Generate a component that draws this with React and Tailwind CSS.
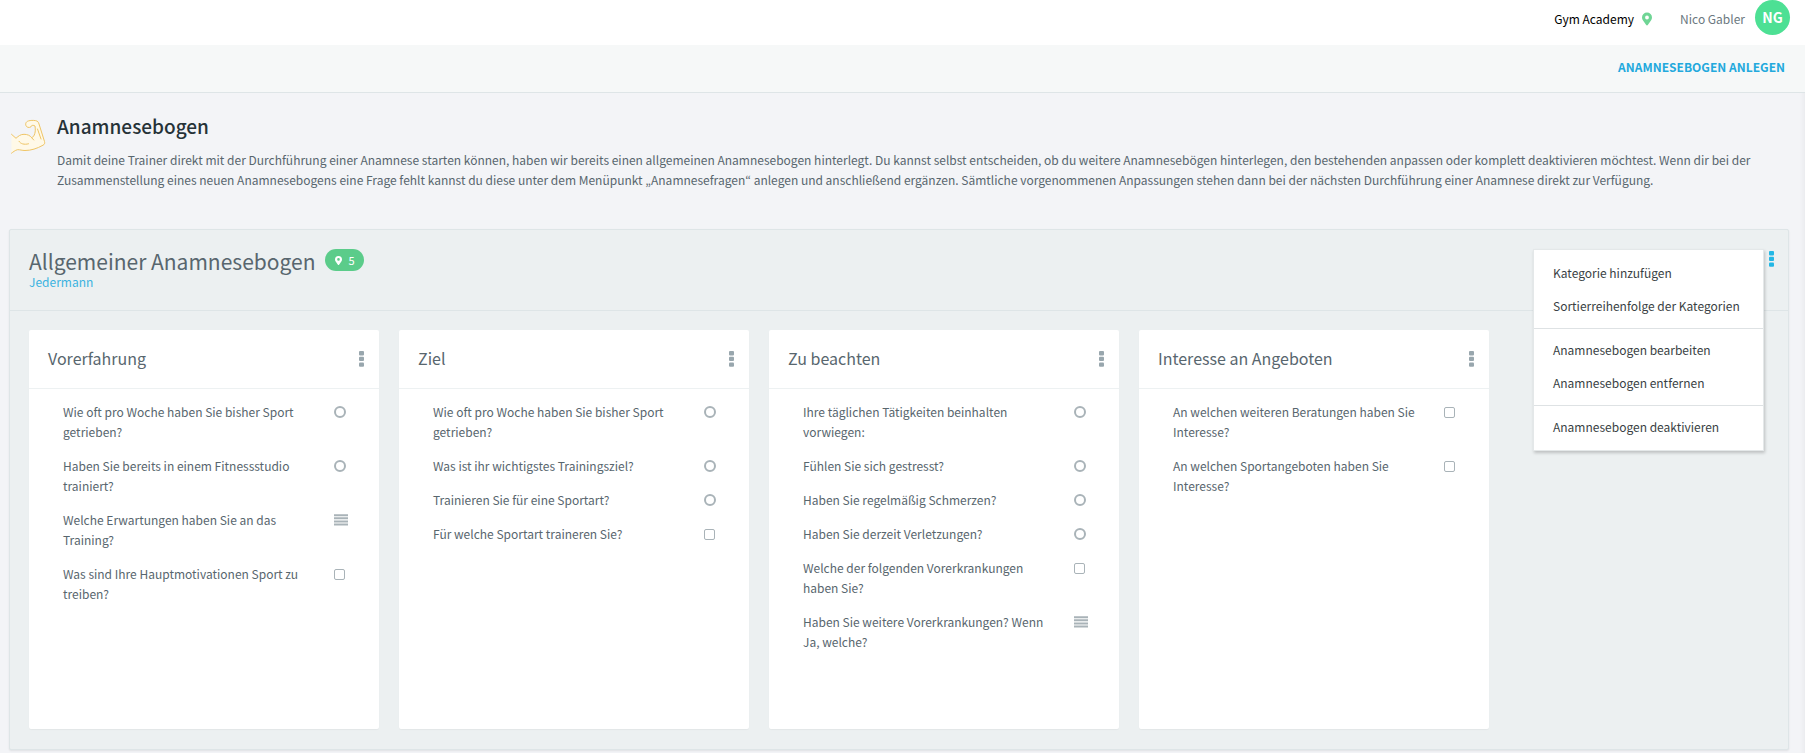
import { useState } from 'react';

const TYPES = { RADIO: 'radio', CHECKBOX: 'checkbox', TEXT: 'text' };

const categories = [
  {
    id: 'vorerfahrung',
    title: 'Vorerfahrung',
    questions: [
      { text: 'Wie oft pro Woche haben Sie bisher Sport getrieben?', type: TYPES.RADIO },
      { text: 'Haben Sie bereits in einem Fitnessstudio trainiert?', type: TYPES.RADIO },
      { text: 'Welche Erwartungen haben Sie an das Training?', type: TYPES.TEXT },
      { text: 'Was sind Ihre Hauptmotivationen Sport zu treiben?', type: TYPES.CHECKBOX },
    ],
  },
  {
    id: 'ziel',
    title: 'Ziel',
    questions: [
      { text: 'Wie oft pro Woche haben Sie bisher Sport getrieben?', type: TYPES.RADIO },
      { text: 'Was ist ihr wichtigstes Trainingsziel?', type: TYPES.RADIO },
      { text: 'Trainieren Sie für eine Sportart?', type: TYPES.RADIO },
      { text: 'Für welche Sportart traineren Sie?', type: TYPES.CHECKBOX },
    ],
  },
  {
    id: 'beachten',
    title: 'Zu beachten',
    questions: [
      { text: 'Ihre täglichen Tätigkeiten beinhalten vorwiegen:', type: TYPES.RADIO },
      { text: 'Fühlen Sie sich gestresst?', type: TYPES.RADIO },
      { text: 'Haben Sie regelmäßig Schmerzen?', type: TYPES.RADIO },
      { text: 'Haben Sie derzeit Verletzungen?', type: TYPES.RADIO },
      { text: 'Welche der folgenden Vorerkrankungen haben Sie?', type: TYPES.CHECKBOX },
      { text: 'Haben Sie weitere Vorerkrankungen? Wenn Ja, welche?', type: TYPES.TEXT },
    ],
  },
  {
    id: 'angebote',
    title: 'Interesse an Angeboten',
    questions: [
      { text: 'An welchen weiteren Beratungen haben Sie Interesse?', type: TYPES.CHECKBOX },
      { text: 'An welchen Sportangeboten haben Sie Interesse?', type: TYPES.CHECKBOX },
    ],
  },
];

const menuGroups = [
  ['Kategorie hinzufügen', 'Sortierreihenfolge der Kategorien'],
  ['Anamnesebogen bearbeiten', 'Anamnesebogen entfernen'],
  ['Anamnesebogen deaktivieren'],
];

function PinIcon({ className }) {
  return (
    <svg viewBox="0 0 10 14" className={className} fill="currentColor" aria-hidden="true">
      <path
        fillRule="evenodd"
        d="M5 .5a5 5 0 0 0-5 5c0 1 .3 1.700.7 2.400L4.200 13a.9.9 0 0 0 1.600 0L9.300 7.900C9.700 7.200 10 6.500 10 5.500a5 5 0 0 0-5-5Zm0 3.100a1.900 1.900 0 1 1 0 3.800 1.900 1.900 0 0 1 0-3.800Z"
      />
    </svg>
  );
}

function DotsIcon() {
  return (
    <svg viewBox="0 0 5 16" className="h-4 w-[5px]" fill="currentColor" aria-hidden="true">
      <rect width="5" height="4.400" rx="1" />
      <rect y="5.700" width="5" height="4.400" rx="1" />
      <rect y="11.400" width="5" height="4.400" rx="1" />
    </svg>
  );
}

function LinesIcon() {
  return (
    <svg viewBox="0 0 14 12" className="h-3 w-[14px] text-[#a9b3b8]" fill="currentColor" aria-hidden="true">
      <path d="M0 .2h14v2H0zM0 3.300h14v2H0zM0 6.400h14v2H0zM0 9.500h14v2H0z" />
    </svg>
  );
}

function MuscleIcon() {
  return (
    <svg viewBox="0 0 34 34" className="h-[34px] w-[34px] overflow-visible" fill="none" aria-hidden="true">
      <path
        d="M.5 14.300 5 18.300C7.500 16 9.500 14.300 13 14.300c3.500 0 6 1.200 7.700 3.400C23.500 16.500 25 12 24 6c-1.200-.8-2.600-.8-3.300-.4C20.500 7.500 17 8.200 15.500 6.500 14 4.500 14.500 1.800 17.500.9c2-.6 4.700-.6 7-.3 2.200.4 3 1.600 3.500 3.400l5.500 17.500c.5 1.800 0 2.900-1.500 3.700-6 3.400-12 5.300-18 5.300-3 0-5-.9-7.500-.8-2.500.6-4.300 2.300-6 3.500Z"
        fill="#fff9e8"
      />
      <path
        d="M.5 14.300 5 18.300C7.500 16 9.500 14.300 13 14.300c3.500 0 6 1.200 7.700 3.400C23.500 16.500 25 12 24 6c-1.200-.8-2.600-.8-3.300-.4C20.500 7.500 17 8.200 15.500 6.500 14 4.500 14.500 1.800 17.500.9c2-.6 4.700-.6 7-.3 2.200.4 3 1.600 3.500 3.400l5.500 17.500c.5 1.800 0 2.900-1.500 3.700-6 3.400-12 5.300-18 5.300-3 0-5-.9-7.500-.8-2.500.6-4.300 2.300-6 3.500M8 21.300c1.500 2.500 5 3.700 9.500 2.500M26.500 9l3.500 10M20.700 17.700l2 2.300"
        stroke="#efc566"
        strokeLinecap="round"
        strokeLinejoin="round"
      />
    </svg>
  );
}

function QuestionRow({ id, name, question }) {
  return (
    <li className="flex items-start justify-between">
      <label htmlFor={id} className="w-[250px]">
        {question.text}
      </label>
      <span className="flex h-5 w-[14px] items-center">
        {question.type === TYPES.RADIO && (
          <input
            id={id}
            name={name}
            type="radio"
            className="h-3 w-3 appearance-none rounded-full border-2 border-[#a9b3b8] checked:bg-[#a9b3b8]"
          />
        )}
        {question.type === TYPES.CHECKBOX && (
          <input
            id={id}
            type="checkbox"
            className="h-[11px] w-[11px] appearance-none rounded-[2px] border border-[#a9b3b8] checked:bg-[#a9b3b8]"
          />
        )}
        {question.type === TYPES.TEXT && (
          <button id={id} type="button" aria-label="Freitext">
            <LinesIcon />
          </button>
        )}
      </span>
    </li>
  );
}

function CategoryCard({ category }) {
  return (
    <section className="min-h-[399px] w-[350px] rounded-[2px] bg-white shadow-[0_1px_1px_rgba(0,0,0,0.04)]">
      <div className="flex h-[59px] items-center justify-between border-b border-[#edf1f2] pr-[15px] pl-[19px]">
        <h3 className="pb-0.5 text-base text-[#58666e]">{category.title}</h3>
        <button type="button" aria-label="Kategorie-Menü" className="text-[#98a6ad]">
          <DotsIcon />
        </button>
      </div>
      <ul className="flex flex-col gap-[14px] pt-[13px] pr-[31px] pb-5 pl-[34px]">
        {category.questions.map((question, i) => (
          <QuestionRow
            key={question.text}
            id={`${category.id}-${i}`}
            name={`${category.id}-${i}`}
            question={question}
          />
        ))}
      </ul>
    </section>
  );
}

function SheetMenu() {
  return (
    <div className="absolute top-[19px] right-6 w-[231px] border border-[#e4e8e9] bg-white pt-0.5 pb-px shadow-[1px_2px_3px_rgba(0,0,0,0.2)]">
      {menuGroups.map((group) => (
        <div key={group[0]} className="border-b border-[#dee2e4] py-[5px] last:border-b-0">
          {group.map((item) => (
            <button
              key={item}
              type="button"
              className="block h-[33px] w-full px-[19px] pb-0.5 text-left whitespace-nowrap text-[#3a3f44] hover:bg-[#edf1f2]"
            >
              {item}
            </button>
          ))}
        </div>
      ))}
    </div>
  );
}

export default function App() {
  const [menuOpen, setMenuOpen] = useState(true);

  return (
    <div className="min-h-screen bg-[#f3f4f7] font-['Noto_Sans_CJK_KR','Noto_Sans',sans-serif] text-xs leading-5 text-[#58666e]">
      <header className="flex h-[45px] items-start justify-end bg-white pr-[15px]">
        <div className="flex h-[38px] items-center gap-2 text-black">
          Gym Academy
          <PinIcon className="h-[14px] w-[10px] text-[#6fd595]" />
        </div>
        <button type="button" className="ml-7 flex h-[38px] items-center gap-[10px] text-[#6b7880]">
          Nico Gabler
          <span className="-mt-1 flex h-[35px] w-[35px] items-center justify-center rounded-full bg-[#4de094] text-sm font-bold text-white">
            NG
          </span>
        </button>
      </header>

      <div className="flex h-12 items-center justify-end border-b border-[#dee5e7] bg-[#f6f8f8] pr-5 pb-[3px]">
        <a href="#anlegen" className="font-bold text-[#23a9dd]">
          ANAMNESEBOGEN ANLEGEN
        </a>
      </div>

      <main className="pr-4 pb-1 pl-[9px] shadow-[inset_-5px_0_4px_-3px_rgba(0,0,0,0.04)]">
        <div className="flex gap-3 pt-5">
          <div className="shrink-0 pt-[7px] pl-[2px]">
            <MuscleIcon />
          </div>
          <div>
            <h1 className="text-[19px] leading-[26px] font-medium text-[#263238]">Anamnesebogen</h1>
            <p className="mt-[11px]">
              Damit deine Trainer direkt mit der Durchführung einer Anamnese starten können, haben wir bereits einen
              allgemeinen Anamnesebogen hinterlegt. Du kannst selbst entscheiden, ob du weitere Anamnesebögen
              hinterlegen, den bestehenden anpassen oder komplett deaktivieren möchtest. Wenn dir bei der
              Zusammenstellung eines neuen Anamnesebogens eine Frage fehlt kannst du diese unter dem Menüpunkt
              „Anamnesefragen“ anlegen und anschließend ergänzen. Sämtliche vorgenommenen Anpassungen stehen dann bei
              der nächsten Durchführung einer Anamnese direkt zur Verfügung.
            </p>
          </div>
        </div>

        <section className="mt-[39px] rounded-[2px] border border-[#dee5e7] bg-[#ecf0f1] shadow-[0_1px_2px_rgba(0,0,0,0.08)]">
          <div className="relative flex h-[81px] justify-between border-b border-[#dee5e7] pt-[19px] pr-[14px] pl-[19px]">
            <div>
              <div className="flex items-start gap-[10px]">
                <h2 className="text-[21px] leading-6">Allgemeiner Anamnesebogen</h2>
                <span className="flex h-[22px] w-[39px] items-center justify-center gap-[6px] rounded-full bg-[#5bcc8a] text-[11px] text-white">
                  <PinIcon className="h-[11px] w-[7px]" />5
                </span>
              </div>
              <a href="#jedermann" className="block leading-[18px] text-[#3bb3e0]">
                Jedermann
              </a>
            </div>
            <button
              type="button"
              aria-label="Anamnesebogen-Menü"
              aria-expanded={menuOpen}
              onClick={() => setMenuOpen(!menuOpen)}
              className="mt-0.5 h-4 text-[#23b7e5]"
            >
              <DotsIcon />
            </button>
            {menuOpen && <SheetMenu />}
          </div>
          <div className="flex flex-wrap gap-5 px-[19px] pt-[19px] pb-5">
            {categories.map((category) => (
              <CategoryCard key={category.id} category={category} />
            ))}
          </div>
        </section>
      </main>
    </div>
  );
}
